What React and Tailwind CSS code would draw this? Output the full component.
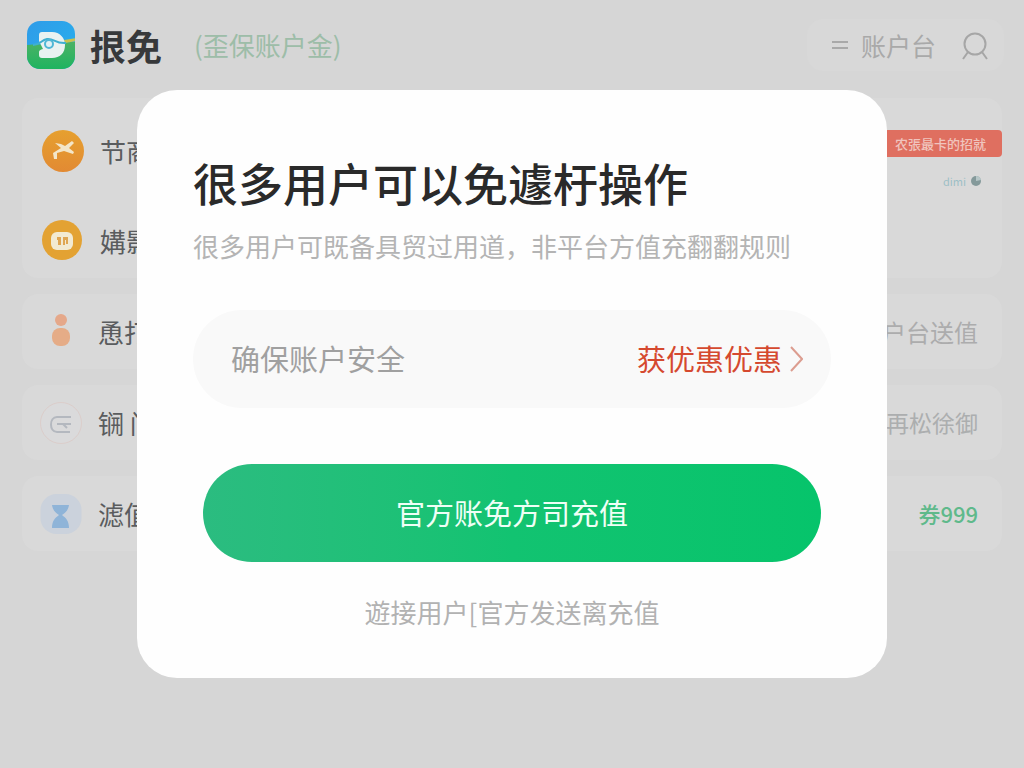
function Logo() {
  return (
    <svg viewBox="0 0 50 50" className="size-[50px]" aria-hidden="true">
      <defs>
        <linearGradient id="sky" x1="0" y1="0" x2="1" y2="1">
          <stop offset="0" stopColor="#2f9be8" />
          <stop offset="1" stopColor="#27b2ee" />
        </linearGradient>
        <linearGradient id="grass" x1="0" y1="0" x2="0" y2="1">
          <stop offset="0" stopColor="#4bb266" />
          <stop offset="1" stopColor="#1db45f" />
        </linearGradient>
        <clipPath id="tile">
          <rect x="1" y="1" width="48" height="48" rx="13" />
        </clipPath>
      </defs>
      <g clipPath="url(#tile)">
        <rect width="50" height="50" fill="url(#sky)" />
        <path d="M0 25 C9 24 15 25 24 24 S38 22 50 22 V50 H0Z" fill="url(#grass)" />
        <path d="M38 20 L50 18 V21 L39 23Z" fill="#c9c24f" />
      </g>
      <path d="M16 12 H26 C34 12 39 18 39 25 C39 33 34 38 26 38 H16 Q13 38 13 35 V32 Q13 30 17 29 L13 21 V15 Q13 12 16 12Z" fill="#e9f2f1" />
      <path d="M7 25 C14 25 15 20 21 19 C28 18 29 24 40 23" fill="none" stroke="#3fb0d0" strokeWidth="2" />
      <circle cx="23" cy="24" r="4" fill="#dff0f4" stroke="#4fb7d6" strokeWidth="2" />
    </svg>
  );
}

function PlaneIcon() {
  return (
    <svg viewBox="0 0 42 42" className="size-[42px]" aria-hidden="true">
      <defs>
        <linearGradient id="orange" x1="0" y1="0" x2="0" y2="1">
          <stop offset="0" stopColor="#e6a02f" />
          <stop offset="1" stopColor="#e28a33" />
        </linearGradient>
      </defs>
      <circle cx="21" cy="21" r="21" fill="url(#orange)" />
      <path d="M13 13 L19 14 L23 16 L30 11 L32 13 L27 18 L32 22 L31 24 L22 21 L15 23 L15 29 L12 29 L11 23 L19 18Z" fill="#f3e6c9" />
    </svg>
  );
}

function CardIcon() {
  return (
    <svg viewBox="0 0 42 42" className="size-[42px]" aria-hidden="true">
      <circle cx="20" cy="20" r="20" fill="#e3a233" />
      <rect x="9" y="12" width="22" height="18" rx="6" fill="#f2ead2" />
      <path d="M15 17 H19 V25 H16 V20 H15Z M21 17 H26 V24 H24 V20 H23 V25 H21Z" fill="#dfa653" />
    </svg>
  );
}

function PersonIcon() {
  return (
    <svg viewBox="0 0 42 42" className="size-[42px]" aria-hidden="true">
      <circle cx="21" cy="9" r="6" fill="#e5a88a" />
      <rect x="12" y="17" width="18" height="18" rx="8" fill="#e5ac87" />
    </svg>
  );
}

function CoinIcon() {
  return (
    <svg viewBox="0 0 42 42" className="size-[42px]" fill="none" aria-hidden="true">
      <circle cx="21" cy="21" r="20.500" fill="#dadadb" stroke="#dbcdca" />
      <path d="M31 15 H17 C9 15 9 30 17 30 H30 M17 22 H31 M23 22 L27 26" stroke="#b4b8bf" strokeWidth="2" />
    </svg>
  );
}

function HourglassIcon() {
  return (
    <svg viewBox="0 0 42 42" className="size-[42px]" aria-hidden="true">
      <rect x="0.500" y="1" width="41" height="40" rx="16" fill="#cbd2dc" />
      <path d="M12 12 H29 C28 18 25 20 22 22 C26 25 29 28 29 35 H12 C12 28 15 25 19 22 C16 20 13 18 12 12Z" fill="#8fb4d8" />
    </svg>
  );
}

function Item({ icon, label }) {
  return (
    <div className="flex items-center gap-4">
      {icon}
      <span className="text-[26px] leading-8 whitespace-nowrap text-[#5a5c5e]">{label}</span>
    </div>
  );
}

function Card({ icon, label, value, valueClass }) {
  return (
    <li className="flex h-[75px] items-center justify-between rounded-2xl bg-[#d9d9d9] pr-6 pl-[18px]">
      <Item icon={icon} label={label} />
      <span className={valueClass}>{value}</span>
    </li>
  );
}

export default function App() {
  return (
    <div className="min-h-screen bg-[#d6d6d6] font-['Noto_Sans_CJK_SC',sans-serif]">
      <header className="flex items-center justify-between pt-[19px] pr-5 pl-[26px]">
        <div className="flex items-center">
          <Logo />
          <h1 className="ml-[14px] text-4xl leading-[52px] font-bold text-[#37393b]">拫免</h1>
          <span className="ml-8 text-[26px] leading-8 text-[#9dbda8]">(歪保账户金)</span>
        </div>
        <nav className="flex h-[52px] items-center rounded-2xl bg-[#d8d8d8] pr-[14px] pl-6">
          <button type="button" className="flex items-center gap-3 text-[25px] leading-8 text-[#a9a9a9]">
            <svg viewBox="0 0 18 12" className="h-3 w-[18px]" stroke="currentColor" strokeWidth="2" aria-hidden="true">
              <path d="M1 3 H17 M1 9 H17" />
            </svg>
            账户台
          </button>
          <button type="button" aria-label="账户" className="ml-6 text-[#a6a6a6]">
            <svg viewBox="0 0 30 30" className="size-[30px]" fill="none" stroke="currentColor" strokeWidth="2" aria-hidden="true">
              <circle cx="15" cy="14" r="10.500" />
              <path d="M8 22 L3 29 M22 22 L27 29" />
            </svg>
          </button>
        </nav>
      </header>

      <main className="px-[22px] pt-[27px]">
        <section className="flex justify-between rounded-2xl bg-[#d9d9d9] pt-8 pb-4 pl-5">
          <div className="flex flex-col gap-12">
            <Item icon={<PlaneIcon />} label="节商" />
            <Item icon={<CardIcon />} label="媾影" />
          </div>
          <div className="flex flex-col items-end gap-4">
            <strong className="rounded-sm bg-[#df6f60] py-1 pr-4 pl-8 text-[13px] leading-[19px] font-medium text-[#f0c4bd]">
              农張最卡的招就
            </strong>
            <span className="mr-5 flex items-center gap-1 text-[11px] leading-4 text-[#9dbfc6]">
              dimi
              <svg viewBox="0 0 12 12" className="size-3" aria-hidden="true">
                <circle cx="6" cy="6" r="5" fill="#84999a" />
                <path d="M6 6 V1 A5 5 0 0 1 11 5Z" fill="#b7c7c8" />
              </svg>
            </span>
          </div>
        </section>

        <ul className="mt-4 flex flex-col gap-4">
          <Card icon={<PersonIcon />} label="恿打" value="客户台送值" valueClass="text-2xl text-[#acacad]" />
          <Card icon={<CoinIcon />} label="锎 门" value="再松徐御" valueClass="text-[23px] text-[#acaeaf]" />
          <Card icon={<HourglassIcon />} label="滤值" value="券999" valueClass="text-[22px] font-medium text-[#5fb98b]" />
        </ul>
      </main>

      <div className="fixed inset-0 flex items-center justify-center p-6">
        <div
          role="dialog"
          aria-modal="true"
          aria-labelledby="dialog-title"
          className="w-full max-w-[750px] rounded-[40px] bg-[#fefefe] px-14 pt-[66px] pb-[50px]"
        >
          <h2 id="dialog-title" className="text-[45px] leading-[54px] font-medium text-[#2a2a2a]">
            很多用户可以免遽杅操作
          </h2>
          <p className="mt-5 text-[26px] leading-8 whitespace-nowrap text-[#b4b4b4]">
            很多用户可既备具贸过用道，非平台方值充翻翻规则
          </p>
          <button
            type="button"
            className="mt-12 flex h-[98px] w-full items-center justify-between rounded-full bg-[#f9f9f9] pr-7 pl-[38px] text-[29px]"
          >
            <span className="text-[#a0a0a0]">确保账户安全</span>
            <span className="flex items-center gap-2 text-[#d5492f]">
              获优惠优惠
              <svg viewBox="0 0 13 26" className="h-[26px] w-[13px]" fill="none" stroke="#dc9d90" strokeWidth="2" aria-hidden="true">
                <path d="M1 1 L12 13 L1 25" />
              </svg>
            </span>
          </button>
          <div className="mt-14 px-[10px]">
            <button
              type="button"
              className="h-[98px] w-full rounded-full bg-linear-to-r from-[#2bbc80] via-[#12c371] to-[#06c46b] text-[29px] text-[#effff6]"
            >
              官方账免方司充值
            </button>
          </div>
          <p className="mt-[34px] text-center text-[26px] leading-8 text-[#b2b2b2]">
            遊接用户[官方发送离充值
          </p>
        </div>
      </div>
    </div>
  );
}
